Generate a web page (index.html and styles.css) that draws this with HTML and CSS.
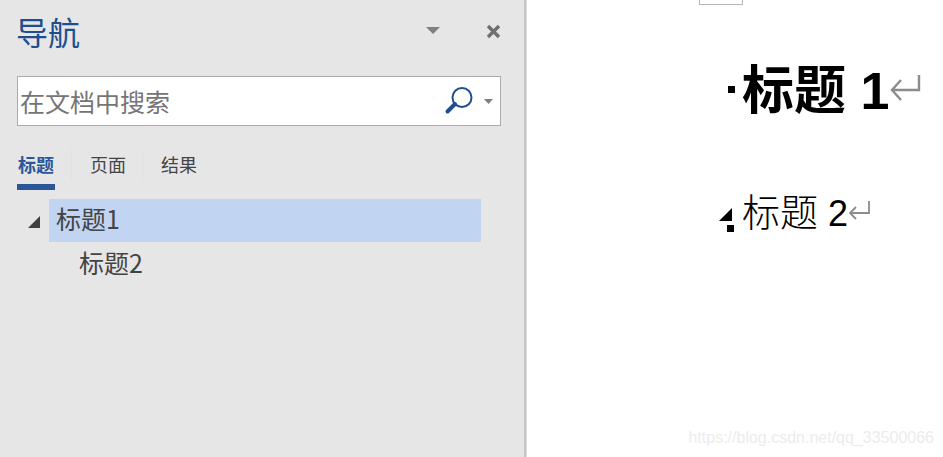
FILE: index.html
```html
<!DOCTYPE html>
<html lang="zh-CN">
<head>
    <meta charset="UTF-8">
    <title>导航</title>
    <link rel="stylesheet" href="styles.css">
</head>
<body>
    <div class="app">
        <aside class="nav-pane">
            <div class="nav-head">
                <h1>导航</h1>
                <svg class="head-arrow" width="14" height="8" viewBox="0 0 14 8"><path d="M0 0H14L7 7Z" fill="#7f7f7f"/></svg>
                <svg class="head-close" width="15" height="15" viewBox="0 0 15 15"><path d="M2 2L13 13M13 2L2 13" stroke="#6f6f6f" stroke-width="3.4" fill="none"/></svg>
            </div>
            <div class="search">
                <span class="search-text">在文档中搜索</span>
                <svg class="search-icon" width="30" height="30" viewBox="0 0 30 30"><circle cx="18" cy="11.500" r="9.500" fill="none" stroke="#1f4e8f" stroke-width="2"/><path d="M11 18L3.500 25.500" stroke="#1f4e8f" stroke-width="4" stroke-linecap="round" fill="none"/></svg>
                <svg class="search-arrow" width="9" height="5" viewBox="0 0 9 5"><path d="M0 0H9L4.500 5Z" fill="#7f7f7f"/></svg>
            </div>
            <div class="tabs">
                <div class="tab active">标题</div>
                <span class="tab-sep"></span>
                <div class="tab">页面</div>
                <span class="tab-sep tab-sep-last"></span>
                <div class="tab">结果</div>
            </div>
            <div class="tree">
                <div class="tree-row">
                    <svg class="tree-arrow" width="12" height="12" viewBox="0 0 12 12"><path d="M12 0V12H0Z" fill="#404040"/></svg>
                    <div class="tree-label selected">标题1</div>
                </div>
                <div class="tree-sub">标题2</div>
            </div>
        </aside>
        <main class="doc">
            <div class="page-corner"></div>
            <div class="doc-h1">
                <span class="mark-dot"></span>
                <span class="doc-h1-text">标题 1</span>
                <svg class="h1-return" width="32" height="28" viewBox="0 0 32 28"><path d="M30 2V17H3M12 7L3 17L12 27" fill="none" stroke="#8c8c8c" stroke-width="2.400"/></svg>
            </div>
            <div class="doc-h2">
                <span class="mark-group">
                    <svg class="mark-tri" width="13" height="13" viewBox="0 0 13 13"><path d="M13 0V13H0Z" fill="#000"/></svg>
                    <span class="mark-square"></span>
                </span>
                <span class="doc-h2-text"><span class="h2-cjk">标题</span> 2</span>
                <svg width="23" height="22" viewBox="0 0 23 22"><path d="M21 1V13H2M8 7L2 13L8 19" fill="none" stroke="#8c8c8c" stroke-width="1.800"/></svg>
            </div>
            <div class="watermark">https://blog.csdn.net/qq_33500066</div>
        </main>
    </div>
</body>
</html>
```

FILE: styles.css
```css
html, body {
    margin: 0;
    height: 100%;
    overflow: hidden;
}
body {
    font-family: "Noto Sans CJK SC", "Liberation Sans", sans-serif;
    background: #fff;
}
.app {
    display: flex;
    height: 457px;
}
.nav-pane {
    width: 526px;
    box-sizing: border-box;
    padding: 0 23px 0 17px;
    background: #e6e6e6;
    border-right: 2px solid #c6c6c6;
    flex: none;
}
.nav-head {
    display: flex;
    align-items: center;
    height: 76px;
    padding-bottom: 14px;
    box-sizing: border-box;
}
.nav-head h1 {
    margin: 0 0 0 -1px;
    font-size: 32px;
    font-weight: 400;
    color: #1f4e8f;
    flex: 1;
    line-height: 40px;
}
.head-arrow {
    margin-right: 46px;
}
.search {
    display: flex;
    align-items: center;
    height: 50px;
    box-sizing: border-box;
    padding: 0 7px 0 2px;
    background: #fff;
    border: 1px solid #ababab;
}
.search-text {
    flex: 1;
    font-size: 25px;
    color: #757575;
}
.search-icon {
    margin-right: 10px;
}
.tabs {
    display: flex;
    margin-top: 23px;
    height: 41px;
}
.tab {
    font-size: 18px;
    line-height: 30px;
    color: #444;
    width: 38px;
    text-align: center;
}
.tab-sep {
    width: 1px;
    height: 31px;
    margin: 0 17px 0 16px;
    background: #e1e1e1;
}
.tab-sep-last {
    margin-left: 15px;
}
.active {
    font-weight: 700;
    color: #2b579a;
    border-bottom: 6px solid #2b579a;
    height: 35px;
}
.tree {
    margin-top: 9px;
    font-size: 25px;
    color: #444;
}
.tree-row {
    display: flex;
    align-items: center;
}
.tree-arrow {
    margin: 3px 9px 0 11px;
}
.tree-label {
    width: 432px;
    height: 43px;
    line-height: 39px;
    padding-left: 7px;
    box-sizing: border-box;
}
.selected {
    background: #c1d5f2;
}
.tree-sub {
    padding-left: 62px;
    line-height: 40px;
}
.doc {
    flex: 1;
    position: relative;
    border-left: 1px solid #dcdcdc;
}
.page-corner {
    position: absolute;
    left: 172px;
    top: -1px;
    width: 42px;
    height: 5px;
    border: 1px solid #b5b5b5;
    border-top: 0;
}
.doc-h1, .doc-h2 {
    position: absolute;
    display: flex;
    align-items: center;
    color: #000;
}
.doc-h1 {
    left: 201px;
    top: 56px;
    height: 66px;
}
.mark-dot {
    width: 7px;
    height: 7px;
    background: #000;
    margin-right: 7px;
}
.doc-h1-text {
    font-size: 52px;
    font-weight: 700;
    line-height: 60px;
    margin-top: 4px;
    font-family: "Liberation Sans", "Noto Sans CJK SC", sans-serif;
}
.h1-return {
    margin-bottom: 4px;
}
.doc-h2 {
    left: 192px;
    top: 186px;
    height: 50px;
}
.mark-group {
    display: flex;
    flex-direction: column;
    align-items: flex-end;
    gap: 4px;
    margin-right: 8px;
    margin-top: 18px;
}
.mark-tri {
    margin-right: 2px;
}
.mark-square {
    width: 7px;
    height: 7px;
    background: #000;
}
.doc-h2-text {
    font-size: 36px;
    font-weight: 400;
    line-height: 48px;
    margin-top: 4px;
    font-family: "Liberation Sans", "Noto Sans CJK SC", sans-serif;
}
.h2-cjk {
    font-size: 38px;
    font-weight: 300;
}
.watermark {
    position: absolute;
    right: 9px;
    top: 429px;
    font-family: "Liberation Sans", sans-serif;
    font-size: 16px;
    color: #ececec;
}
```
